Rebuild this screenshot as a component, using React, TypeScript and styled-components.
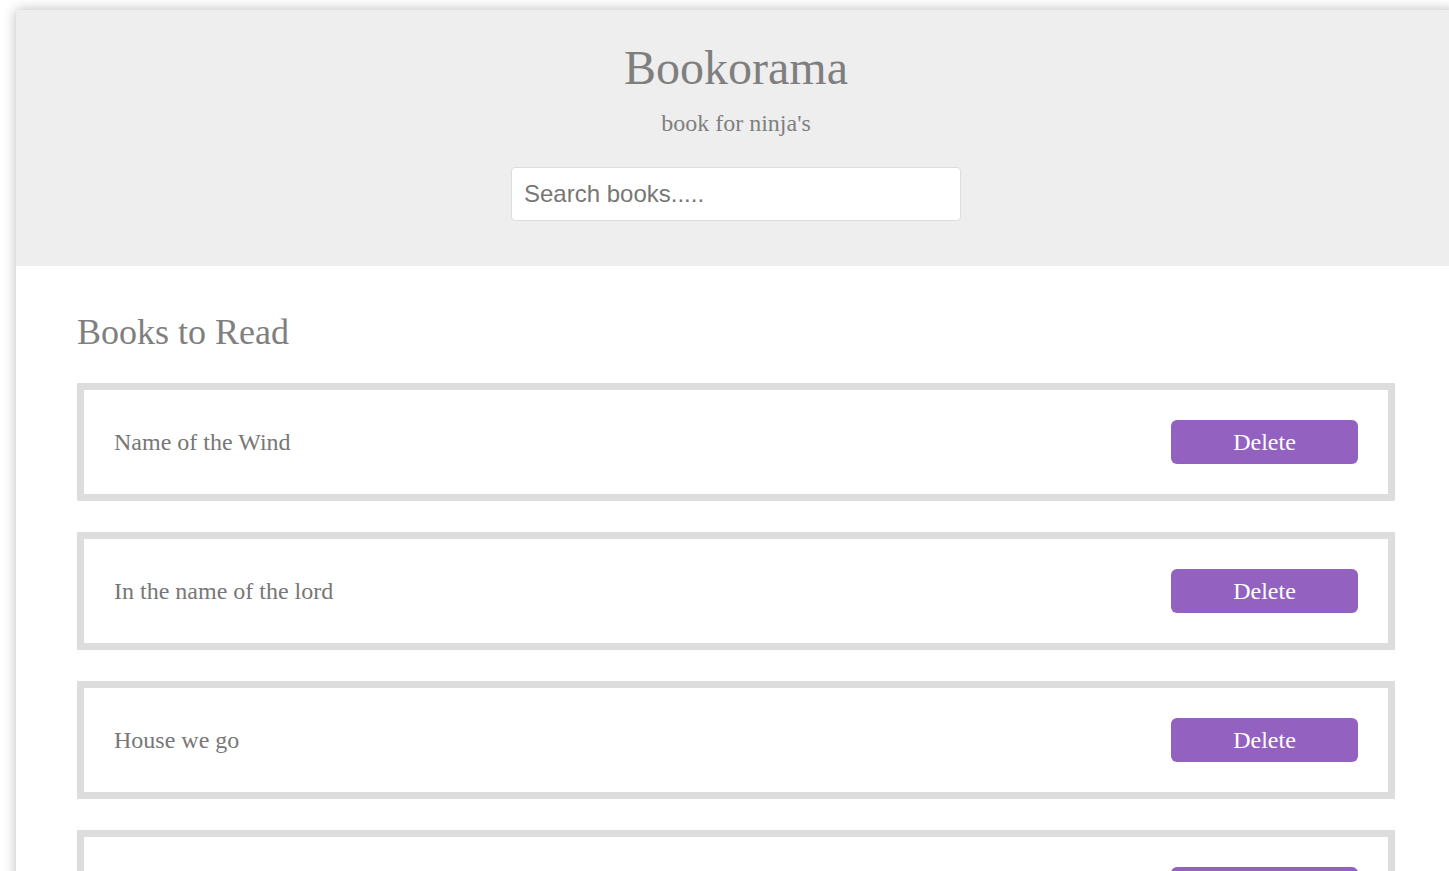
import React from "react";
import styled, { createGlobalStyle } from "styled-components";

const GlobalStyle = createGlobalStyle`
  html, body {
    margin: 0;
    padding: 0;
    overflow-x: hidden;
    background: #ffffff;
  }
  body {
    font-family: "Liberation Serif", "Times New Roman", serif;
  }
`;

const Wrapper = styled.div`
  width: 1440px;
  margin: 10px 0 0 16px;
  background: #ffffff;
  box-shadow: 0 0 12px rgba(0, 0, 0, 0.28);
  min-height: 900px;
`;

const Header = styled.header`
  background: #eeeeee;
  padding: 30px 0 45px;
  display: flex;
  flex-direction: column;
  align-items: center;
`;

const Title = styled.h1`
  margin: 0;
  font-family: "Liberation Serif", "Times New Roman", serif;
  font-weight: normal;
  font-size: 48px;
  color: #7f7f7f;
`;

const Subtitle = styled.p`
  margin: 15px 0 0;
  font-size: 24px;
  color: #7f7f7f;
`;

const SearchInput = styled.input`
  box-sizing: border-box;
  margin-top: 30px;
  width: 450px;
  height: 54px;
  padding: 0 12px;
  border: 1px solid #dddddd;
  border-radius: 4px;
  background: #ffffff;
  font-family: "Liberation Sans", Arial, sans-serif;
  font-size: 24px;
  color: #555;
  outline: none;
  &::placeholder {
    color: #777777;
  }
`;

const Main = styled.main`
  padding: 45px 61px 40px 61px;
`;

const SectionTitle = styled.h2`
  margin: 0 0 30px;
  font-weight: normal;
  font-size: 36px;
  color: #7f7f7f;
`;

const List = styled.ul`
  list-style: none;
  margin: 0;
  padding: 0;
  display: flex;
  flex-direction: column;
  gap: 31px;
`;

const Item = styled.li`
  display: flex;
  align-items: center;
  justify-content: space-between;
  border: 7px solid #dddddd;
  padding: 30px;
  background: #ffffff;
`;

const BookName = styled.span`
  font-size: 24px;
  color: #777777;
`;

const DeleteButton = styled.button`
  width: 187px;
  height: 44px;
  border: none;
  border-radius: 6px;
  background: #9361bf;
  color: #ffffff;
  font-family: "Liberation Serif", "Times New Roman", serif;
  font-size: 24px;
  padding: 0;
  cursor: pointer;
`;

const books = [
  "Name of the Wind",
  "In the name of the lord",
  "House we go",
  "The Way of Kings",
];

export default function App() {
  return (
    <>
      <GlobalStyle />
      <Wrapper>
        <Header>
          <Title>Bookorama</Title>
          <Subtitle>book for ninja's</Subtitle>
          <SearchInput placeholder="Search books....." />
        </Header>
        <Main>
          <SectionTitle>Books to Read</SectionTitle>
          <List>
            {books.map((b) => (
              <Item key={b}>
                <BookName>{b}</BookName>
                <DeleteButton>Delete</DeleteButton>
              </Item>
            ))}
          </List>
        </Main>
      </Wrapper>
    </>
  );
}
